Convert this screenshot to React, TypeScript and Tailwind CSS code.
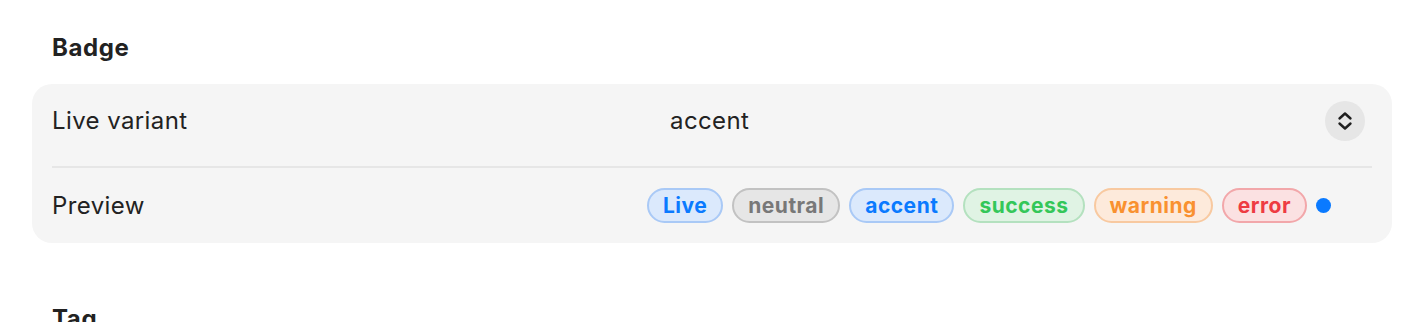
const badges = [
  { label: "Live", cls: "bg-[#dbe9fc] border-[#a9c9f6] text-[#0a7aff]" },
  { label: "neutral", cls: "bg-[#e6e6e6] border-[#c2c2c2] text-[#787878]" },
  { label: "accent", cls: "bg-[#dbe9fc] border-[#a9c9f6] text-[#0a7aff]" },
  { label: "success", cls: "bg-[#e0f3e4] border-[#b4e1bf] text-[#34c759]" },
  { label: "warning", cls: "bg-[#fdeadb] border-[#f8c9a0] text-[#f99130]" },
  { label: "error", cls: "bg-[#fbe1e2] border-[#f2a7aa] text-[#ee3b42]" },
];

function ChevronUpDown() {
  return (
    <svg width="16" height="22" viewBox="0 0 16 22" fill="none" stroke="#1f1f1f" strokeWidth="2.4" strokeLinecap="round" strokeLinejoin="round">
      <path d="M2.5 8.5 L8 3.5 L13.5 8.5" />
      <path d="M2.5 13.5 L8 18.5 L13.5 13.5" />
    </svg>
  );
}

export default function App() {
  return (
    <div className="min-h-[322px] bg-white font-['Inter',sans-serif] text-[#222] px-8 pt-[34px] tracking-[0.4px]">
      <h2 className="pl-5 text-[24px] font-bold leading-[28px] tracking-[0.6px] text-[#222]">Badge</h2>
      <div className="mt-[22px] rounded-[20px] bg-[#f5f5f5] px-5">
        <div className="flex h-[82px] items-center pb-2">
          <span className="text-[24px] w-[606px]">Live variant</span>
          <div className="flex flex-1 items-center pl-3 pr-[7px]">
            <span className="flex-1 text-[24px]">accent</span>
            <div className="flex h-10 w-10 items-center justify-center rounded-full bg-[#e6e6e6]">
              <ChevronUpDown />
            </div>
          </div>
        </div>
        <div className="h-[2px] bg-[#e6e6e6]" />
        <div className="flex h-[75px] items-center">
          <span className="text-[24px]">Preview</span>
          <div className="ml-auto mr-[41px] flex items-center gap-[9px]">
            {badges.map((b) => (
              <span
                key={b.label}
                className={`flex h-[35px] items-center rounded-full border-2 px-[14px] text-[21px] font-bold tracking-[0.5px] ${b.cls}`}
              >
                {b.label}
              </span>
            ))}
            <span className="h-[15px] w-[15px] rounded-full bg-[#0a7aff]" />
          </div>
        </div>
      </div>
      <h2 className="mt-[62px] pl-5 text-[24px] font-bold leading-[28px] tracking-[0.6px]">Tag</h2>
    </div>
  );
}
